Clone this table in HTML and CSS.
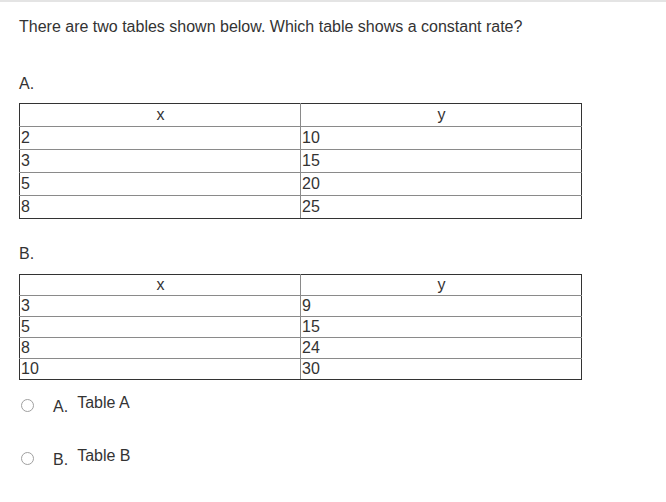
FILE: index.html
```html
<!DOCTYPE html>
<html>
<head>
<meta charset="utf-8">
<link rel="stylesheet" href="styles.css">
</head>
<body>
<div class="topbar"></div>
<main class="content">
  <p class="question">There are two tables shown below. Which table shows a constant rate?</p>
  <p class="label label-a">A.</p>
  <table class="data data-a">
    <tr><th>x</th><th>y</th></tr>
    <tr><td>2</td><td>10</td></tr>
    <tr><td>3</td><td>15</td></tr>
    <tr><td>5</td><td>20</td></tr>
    <tr><td>8</td><td>25</td></tr>
  </table>
  <p class="label label-b">B.</p>
  <table class="data data-b">
    <tr><th>x</th><th>y</th></tr>
    <tr><td>3</td><td>9</td></tr>
    <tr><td>5</td><td>15</td></tr>
    <tr><td>8</td><td>24</td></tr>
    <tr><td>10</td><td>30</td></tr>
  </table>
  <div class="options">
    <label class="option"><span class="radio"></span><span class="letter">A.</span><span class="answer">Table A</span></label>
    <label class="option"><span class="radio"></span><span class="letter">B.</span><span class="answer">Table B</span></label>
  </div>
</main>
</body>
</html>
```

FILE: styles.css
```css
html, body {
  margin: 0;
  padding: 0;
  background: #fff;
}
body {
  font-family: "Liberation Sans", Arial, sans-serif;
  font-size: 16px;
  color: #333;
}
.topbar {
  height: 2px;
  background: #e4e4e4;
}
.content {
  padding: 0 0 0 19px;
}
.question {
  margin: 0;
  padding-top: 15px;
  line-height: 20px;
}
.label {
  margin: 0;
  line-height: 20px;
}
.label-a {
  padding-top: 37px;
}
.label-b {
  padding-top: 25px;
}
.data {
  border-collapse: collapse;
  width: 563px;
  table-layout: fixed;
  border: 1px solid #333;
  font-size: 16px;
  color: #333;
}
.data-a {
  margin-top: 9px;
}
.data-b {
  margin-top: 10px;
}
.data th, .data td {
  border: 1px solid #8a8a8a;
  padding: 0 0 0 1px;
  line-height: 18px;
  font-weight: normal;
  text-align: left;
  vertical-align: middle;
}
.data th {
  text-align: center;
}
.data tr:first-child th {
  border-top-color: #333;
}
.data tr th:first-child, .data tr td:first-child {
  border-left-color: #333;
}
.data tr th:last-child, .data tr td:last-child {
  border-right-color: #333;
}
.data tr:last-child td {
  border-bottom-color: #333;
}
.data-a th, .data-a td {
  height: 22px;
}
.data-b th {
  height: 20px;
}
.data-b td {
  height: 20px;
}
.options {
  display: flex;
  flex-direction: column;
  gap: 33px;
  padding-top: 15px;
}
.option {
  display: flex;
  align-items: center;
  height: 20px;
}
.radio {
  width: 11px;
  height: 11px;
  border: 1px solid #a0a0a0;
  border-radius: 50%;
  margin-left: 2px;
  background: #fff;
}
.letter {
  margin-left: 19px;
  position: relative;
  top: 2px;
}
.answer {
  margin-left: 9px;
  position: relative;
  top: -2px;
}
```
